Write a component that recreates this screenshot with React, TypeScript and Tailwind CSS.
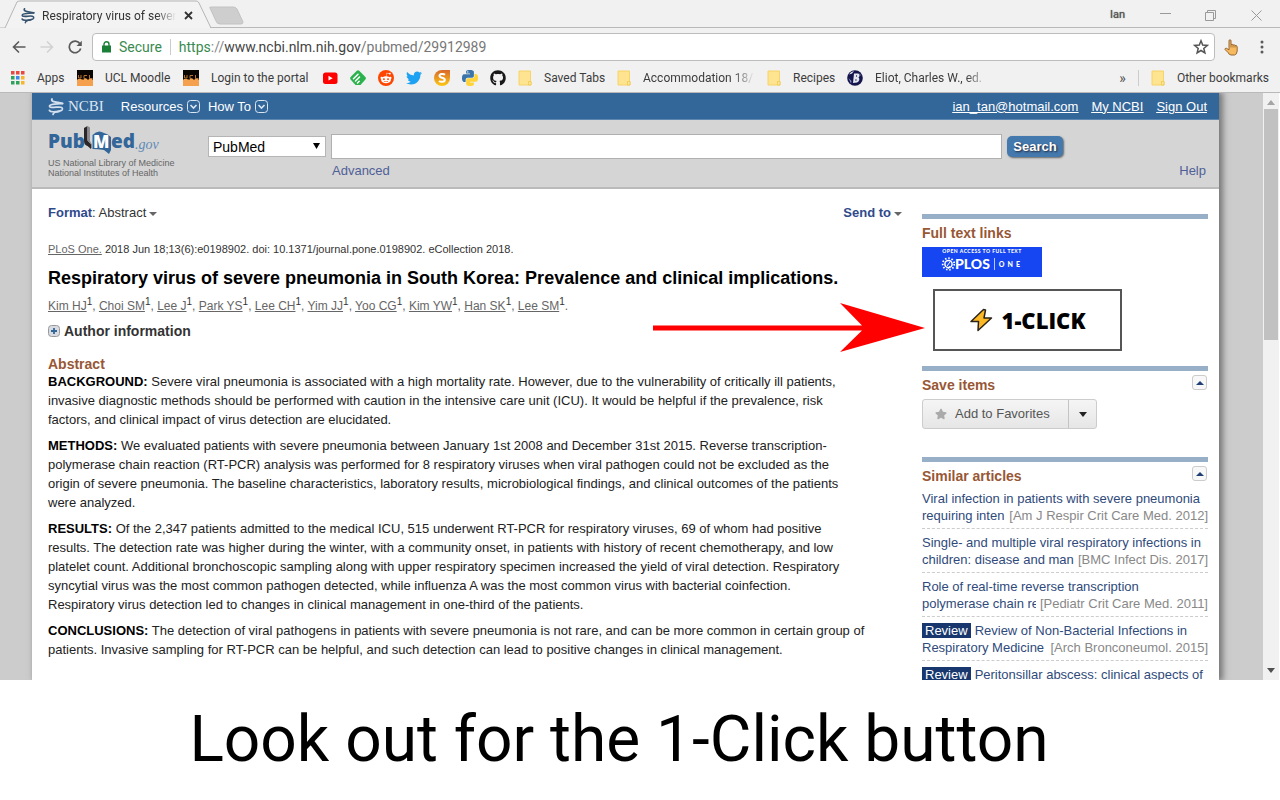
import type { ReactNode } from 'react';
import { FaGithub, FaRedditAlien, FaTwitter, FaStar } from 'react-icons/fa';

const bookLabel = 'overflow-hidden whitespace-nowrap text-[#3c3c3c]';

function HelixIcon({ className, color }: { className: string; color: string }) {
  return (
    <svg viewBox="0 0 16 18" className={className} fill="none" stroke={color} strokeLinecap="round">
      <path d="M14.500 5.500C11 6.500 3 5 1.500 8C1.200 9.800 5 9.500 8 9.200C12 8.800 15 9 14.300 11.500C13.500 14 6 12.500 5 16.500" strokeWidth="1.700" />
      <path d="M4 1C2.500 4.500 9 4 14.500 5.500M1.500 12.500C2 14 8 13.800 11 13.500" strokeWidth="1.900" />
    </svg>
  );
}

function FolderIcon() {
  return (
    <svg viewBox="0 0 14 16" className="h-4 w-[14px] shrink-0">
      <path d="M1 1h11.500v10.500h.5V15H1z" fill="#fee391" stroke="#f6d466" strokeWidth="1" />
      <path d="M10.500 11.500h2.500V15h-2.500z" fill="#fde79f" stroke="#efc84c" strokeWidth=".8" />
    </svg>
  );
}

function UclIcon() {
  return (
    <svg viewBox="0 0 16 16" className="size-4 shrink-0">
      <path d="M0 0h16v16H0z" fill="#f5a04d" />
      <path d="M0 0h16v9.500H15V8.500H12V9.500H10V9H7V9.500H4.500V9H1V9.500H0z" fill="#0b0603" />
      <path d="M1.500 5v3h2.500V5M10 5.500H7v3h2.500M12.500 5v3.500h3" fill="none" stroke="#b5742f" strokeWidth="1" />
    </svg>
  );
}

function YoutubeIcon() {
  return (
    <svg viewBox="0 0 16 16" className="size-4">
      <rect x="1" y="2.500" width="14.500" height="11.500" rx="2.500" fill="#f00" />
      <path d="M6.500 5.800v4.800l4.200-2.400z" fill="#fff" />
    </svg>
  );
}

function FeedlyIcon() {
  return (
    <svg viewBox="0 0 16 16" className="size-4">
      <path d="M6.800.8q1.200-1 2.400 0l6.200 6.200q1 1.200 0 2.400L10.500 15h-5L.6 9.400q-1-1.200 0-2.400z" fill="#2bb24c" />
      <path d="M3.500 8.800L8 4.300M5.500 11L9.500 7M7.500 13l1.700-1.700" stroke="#fff" strokeWidth="1.500" strokeLinecap="round" />
    </svg>
  );
}

function PythonIcon() {
  return (
    <svg viewBox="0 0 24 24" className="size-4">
      <path
        fill="#3b74a8"
        d="M14.25.18l.9.2.73.26.59.3.45.32.34.34.25.34.16.33.1.3.04.26.02.2-.01.13V8.5l-.05.63-.13.55-.21.46-.26.38-.3.31-.33.25-.35.19-.35.14-.33.1-.3.07-.26.04-.21.02H8.77l-.69.05-.59.14-.5.22-.41.27-.33.32-.27.35-.2.36-.15.37-.1.35-.07.32-.04.27-.02.21v3.06H3.17l-.21-.03-.28-.07-.32-.12-.35-.18-.36-.26-.36-.36-.35-.46-.32-.59-.28-.73-.21-.88-.14-1.05-.05-1.23.06-1.22.16-1.04.24-.87.32-.71.36-.57.4-.44.42-.33.42-.24.4-.16.36-.1.32-.05.24-.01h.16l.06.01h8.16v-.83H6.18l-.01-2.75-.02-.37.05-.34.11-.31.17-.28.25-.26.31-.23.38-.2.44-.18.51-.15.58-.12.64-.1.71-.06.77-.04.84-.02 1.27.05zm-6.3 1.98l-.23.33-.08.41.08.41.23.34.33.22.41.09.41-.09.33-.22.23-.34.08-.41-.08-.41-.23-.33-.33-.22-.41-.09-.41.09z"
      />
      <path
        fill="#ffd43b"
        d="M21.1 6.11l.28.06.32.12.35.18.36.27.36.35.35.47.32.59.28.73.21.88.14 1.04.05 1.23-.06 1.23-.16 1.04-.24.86-.32.71-.36.57-.4.45-.42.33-.42.24-.4.16-.36.09-.32.05-.24.02-.16-.01h-8.22v.82h5.84l.01 2.76.02.36-.05.34-.11.31-.17.29-.25.25-.31.24-.38.2-.44.17-.51.15-.58.13-.64.09-.71.07-.77.04-.84.01-1.27-.04-1.07-.14-.9-.2-.73-.25-.59-.3-.45-.33-.34-.34-.25-.34-.16-.33-.1-.3-.04-.25-.02-.2.01-.13v-5.34l.05-.64.13-.54.21-.46.26-.38.3-.32.33-.24.35-.2.35-.14.33-.1.3-.06.26-.04.21-.02.13-.01h5.84l.69-.05.59-.14.5-.21.41-.28.33-.32.27-.35.2-.36.15-.36.1-.35.07-.32.04-.28.02-.21V6.07h2.09l.14.01z"
      />
    </svg>
  );
}

function SearchBadgeIcon() {
  return (
    <svg viewBox="0 0 16 16" className="size-4">
      <defs>
        <linearGradient id="sun" x1="0" y1="0" x2="0" y2="1">
          <stop offset="0" stopColor="#d8692a" />
          <stop offset="1" stopColor="#fcc812" />
        </linearGradient>
      </defs>
      <path d="M8 0h8v8a8 8 0 1 1-8-8z" fill="url(#sun)" />
      <path d="M11 4.800C9.500 3.500 5.500 3.700 5.500 5.800C5.500 8.300 10.800 7.200 10.800 9.900C10.800 12.200 6.800 12.300 5 11" fill="none" stroke="#fff" strokeWidth="2" />
    </svg>
  );
}

function GlobeIcon() {
  return (
    <svg viewBox="0 0 16 16" className="size-4 shrink-0">
      <circle cx="8" cy="8" r="7.800" fill="#15154e" />
      <path d="M2 4.500Q3.500 1.500 7 1L5 3.500zM7 3.500h4c2 0 2 3 .5 4c1.500 1 1 4-1.500 5L6 13z" fill="#e4e6f0" />
      <path d="M1.500 8L4.500 11l-.5 2.500zM12 2.500L14.500 6l-1-.5z" fill="#8d93bd" />
      <path d="M9 5v2l1.300-1zM8.500 9v2l1.500-1z" fill="#15154e" />
    </svg>
  );
}

function Bookmark({ icon, children, width }: { icon: ReactNode; children: string; width: string }) {
  return (
    <a href="#" className="flex shrink-0 items-center gap-3">
      {icon}
      <span className={`${bookLabel} ${width}`}>{children}</span>
    </a>
  );
}

function BrowserChrome() {
  return (
    <header className="border-b border-[#b9b9b9] bg-[#f1f1f1] font-['Roboto',sans-serif] text-xs">
      <div className="relative flex h-7 items-center pt-[3px] pr-4">
        <svg viewBox="0 0 250 28" className="absolute left-0 top-0 h-7 w-[250px]" fill="none">
          <path d="M0 28h5L17 2q1-1 3-1h176q2 0 3 2l12 25h39" fill="#f3f3f3" stroke="#b5b5b5" />
          <path d="M210 8q-1-1 1-1h22q3 0 4 2l6 13q0 2-2 2h-21q-3 0-4-3z" fill="#cecece" stroke="#c2c2c2" />
        </svg>
        <div className="absolute bottom-0 left-[210px] right-0 h-px bg-[#b9b9b9]" />
        <div className="relative flex items-center pl-5">
          <HelixIcon className="h-4 w-4" color="#35536f" />
          <span className="ml-[6px] w-[134px] overflow-hidden whitespace-nowrap text-[#333] [mask-image:linear-gradient(to_right,black_85%,transparent)]">
            Respiratory virus of sever
          </span>
          <button aria-label="Close tab" className="ml-2 text-[#333]">
            <svg viewBox="0 0 9 9" className="size-[9px]" stroke="currentColor" strokeWidth="1.800">
              <path d="M1 1l7 7M8 1L1 8" />
            </svg>
          </button>
        </div>
        <div className="ml-auto flex items-center text-[#999]">
          <button className="mr-[35px] text-[11px] text-[#555] [text-shadow:0_0_1px_#555]">Ian</button>
          <button aria-label="Minimize" className="mr-[34px]">
            <svg viewBox="0 0 11 11" className="size-[11px]" stroke="currentColor"><path d="M0 3.500h11" /></svg>
          </button>
          <button aria-label="Restore" className="mr-[35px]">
            <svg viewBox="0 0 11 11" className="size-[11px]" fill="none" stroke="currentColor">
              <path d="M.5 2.500h8v8h-8zM2.500 2.500v-2h8v8h-2" />
            </svg>
          </button>
          <button aria-label="Close window" className="mr-[2px]">
            <svg viewBox="0 0 11 11" className="size-[11px]" stroke="currentColor"><path d="M.5.5l10 10M10.500.5l-10 10" /></svg>
          </button>
        </div>
      </div>

      <div className="flex h-[38px] items-center pl-3 pr-4">
        <button aria-label="Back" className="mr-[14px]">
          <svg viewBox="0 0 14 14" className="size-[14px]" fill="none" stroke="#5a5a5a" strokeWidth="1.600"><path d="M13.500 7H1.500M7 1.500L1.500 7L7 12.500" /></svg>
        </button>
        <button aria-label="Forward" className="mr-[14px]">
          <svg viewBox="0 0 14 14" className="size-[14px]" fill="none" stroke="#d2d2d2" strokeWidth="1.600"><path d="M.5 7h12M7 1.500L12.500 7L7 12.500" /></svg>
        </button>
        <button aria-label="Reload" className="mr-[10px]">
          <svg viewBox="0 0 14 14" className="size-[14px]">
            <path d="M12 3.800A5.800 5.800 0 1 0 12.700 8.500" fill="none" stroke="#5a5a5a" strokeWidth="1.700" />
            <path d="M13.800.8v5.200H8.500z" fill="#5a5a5a" />
          </svg>
        </button>
        <div className="flex h-7 flex-1 items-center rounded-sm border border-[#bdbdbd] bg-white px-[9px] text-sm">
          <svg viewBox="0 0 9 12" className="mr-2 h-3 w-[9px]">
            <path d="M2 5V3.300a2.500 2.500 0 0 1 5 0V5" fill="none" stroke="#1a7f37" strokeWidth="1.400" />
            <path d="M0 4.500h9V11.500H0z" fill="#1a7f37" />
          </svg>
          <span className="text-[#3a8a50]">Secure</span>
          <span className="mx-2 h-4 w-px bg-[#ccc]" />
          <span className="flex-1 text-[#444]">
            <span className="text-[#3a8a50]">https</span>
            <span className="text-[#888]">://</span>www.ncbi.nlm.nih.gov
            <span className="text-[#777]">/pubmed/29912989</span>
          </span>
          <button aria-label="Bookmark this page" className="-mr-1">
            <svg viewBox="0 0 16 16" className="size-4" fill="none" stroke="#555" strokeWidth="1.500">
              <path d="M8 1.800l1.700 4.300 4.600.3-3.500 3 1.100 4.500L8 11.500l-3.900 2.400 1.100-4.500-3.500-3 4.600-.3z" />
            </svg>
          </button>
        </div>
        <button aria-label="1-Click extension" className="ml-[9px]">
          <svg viewBox="0 0 16 17" className="h-[17px] w-4">
            <path
              d="M5 8.500V1.800Q5 .8 6 .8T7 1.800V5.500Q8.500 4.800 9 6Q10.500 5.300 11 6.500Q13 6 13.200 8V12Q13 15.500 10.500 16H7Q5 15.800 4 13.500L1 10.500Q.8 9 2.500 9.300L5 10.800z"
              fill="#f7b95e"
              stroke="#8b5a2c"
              strokeWidth=".9"
            />
            <path d="M7 5.500v3M9 6v2.500M11 6.500v2" stroke="#9a652f" strokeWidth=".8" />
          </svg>
        </button>
        <button aria-label="Menu" className="ml-5">
          <svg viewBox="0 0 4 14" className="h-[14px] w-1" fill="#5a5a5a">
            <circle cx="2" cy="2" r="1.500" /><circle cx="2" cy="7" r="1.500" /><circle cx="2" cy="12" r="1.500" />
          </svg>
        </button>
      </div>

      <nav className="flex h-[26px] items-center gap-3 pb-1 pl-[11px] pr-[11px] pt-[2px]">
        <Bookmark
          width="w-[28px]"
          icon={
            <svg viewBox="0 0 14 14" className="size-[14px] shrink-0">
              <path d="M0 0h3.500v3.500H0zM5 0h3.500v3.500H5zM10 0h3.500v3.500H10z" fill="#e8483f" />
              <path d="M0 5h3.500v3.500H0zM0 10h3.500v3.500H0zM5 10h3.500v3.500H5z" fill="#2fa25a" />
              <path d="M5 5h3.500v3.500H5z" fill="#3f86ee" />
              <path d="M10 5h3.500v3.500H10zM10 10h3.500v3.500H10z" fill="#f7b52b" />
            </svg>
          }
        >
          Apps
        </Bookmark>
        <Bookmark icon={<UclIcon />} width="w-[66px]">UCL Moodle</Bookmark>
        <Bookmark icon={<UclIcon />} width="w-[99px]">Login to the portal</Bookmark>
        <a href="#" aria-label="YouTube"><YoutubeIcon /></a>
        <a href="#" aria-label="Feedly"><FeedlyIcon /></a>
        <a href="#" aria-label="Reddit" className="flex size-4 items-center justify-center rounded-full bg-[#ff4500] text-white">
          <FaRedditAlien className="size-3" />
        </a>
        <a href="#" aria-label="Twitter" className="text-[#1da1f2]"><FaTwitter className="size-4" /></a>
        <a href="#" aria-label="Scholar"><SearchBadgeIcon /></a>
        <a href="#" aria-label="Python"><PythonIcon /></a>
        <a href="#" aria-label="GitHub" className="text-[#191717]"><FaGithub className="size-4" /></a>
        <Bookmark icon={<FolderIcon />} width="w-[61px]">Saved Tabs</Bookmark>
        <Bookmark icon={<FolderIcon />} width="w-[112px] [mask-image:linear-gradient(to_right,black_80%,transparent)]">
          Accommodation 18/
        </Bookmark>
        <Bookmark icon={<FolderIcon />} width="w-[42px]">Recipes</Bookmark>
        <Bookmark icon={<GlobeIcon />} width="w-[114px] [mask-image:linear-gradient(to_right,black_80%,transparent)]">
          Eliot, Charles W., ed.
        </Bookmark>
        <button aria-label="More bookmarks" className="ml-auto text-sm text-[#555]">»</button>
        <span className="h-4 w-px shrink-0 bg-[#ccc]" />
        <Bookmark icon={<FolderIcon />} width="">Other bookmarks</Bookmark>
      </nav>
    </header>
  );
}

function MenuChevron() {
  return (
    <svg viewBox="0 0 13 13" className="size-[13px]" fill="none" stroke="#dbe6f2">
      <rect x=".5" y=".5" width="12" height="12" rx="3" />
      <path d="M3.500 5l3 3 3-3" strokeWidth="1.600" />
    </svg>
  );
}

function NcbiBar() {
  return (
    <div className="flex h-[27px] items-center border-b border-[#5d86b0] bg-[#336699] pl-4 pr-3 pt-px text-[13px] text-white">
      <a href="#" className="mr-[17px] flex items-center gap-1">
        <HelixIcon className="h-[18px] w-4" color="#d3e0ee" />
        <span className="font-['Liberation_Serif',serif] text-[15px] text-[#dce7f2]">NCBI</span>
      </a>
      <button className="mr-2 flex items-center gap-1">Resources <MenuChevron /></button>
      <button className="flex items-center gap-1">How To <MenuChevron /></button>
      <nav className="ml-auto flex gap-[13px] underline">
        <a href="#">ian_tan@hotmail.com</a>
        <a href="#">My NCBI</a>
        <a href="#">Sign Out</a>
      </nav>
    </div>
  );
}

function PubMedLogo() {
  return (
    <svg viewBox="0 0 114 30" className="h-[30px] w-[114px]" aria-label="PubMed.gov">
      <path d="M36 3l3.500-2v14.500l3.500 3.500v5l-3.500-3q-3.500-1-3.500-5z" fill="#2d2628" />
      <path d="M39.500 1l2.500 1.500v13.500l2 3.500v4l-1-.5v-3.500l-3.500-4z" fill="#8c8c90" />
      <path d="M44.500 10Q50 4 56 8Q60 9 63 12V25L61 29L56 25Q50 24 44.500 24z" fill="#336699" />
      <g fontFamily="'Open Sans', sans-serif" fontWeight="800" fontSize="19" fill="#336699">
        <text x="0" y="23">Pub</text>
        <text x="45" y="23" fill="#fff" fontSize="17">M</text>
        <text x="63" y="23">ed</text>
      </g>
      <text x="87" y="24" fontFamily="'Liberation Serif', serif" fontStyle="italic" fontSize="14" fill="#5f8bb5">.gov</text>
    </svg>
  );
}

function SearchHeader() {
  return (
    <div className="flex h-[69px] border-b-2 border-[#bababa] bg-[#d5d5d5] pl-4">
      <div className="w-40 shrink-0 pt-[5px] text-[9px] leading-[10px] text-[#666]">
        <PubMedLogo />
        <p className="mt-[3px]">US National Library of Medicine</p>
        <p>National Institutes of Health</p>
      </div>
      <div className="flex-1 pt-[14px]">
        <form className="flex items-center gap-[5px] pr-[156px]">
          <span className="relative">
            <select aria-label="Database" className="block h-[21px] w-[118px] appearance-none border border-[#b5b5b5] bg-white pl-1 text-sm leading-none text-black">
              <option>PubMed</option>
            </select>
            <svg viewBox="0 0 7 6" className="pointer-events-none absolute right-[6px] top-[7px] h-[6px] w-[7px]"><path d="M0 0h7L3.500 6z" /></svg>
          </span>
          <input type="text" aria-label="Search term" className="h-[25px] min-w-0 flex-1 border border-[#b0b0b0] bg-white px-1" />
          <button type="button" className="h-[21px] w-14 rounded-[5px] bg-[#4479ae] text-[13px] leading-none font-bold text-white shadow-[1px_1px_2px_#666] [text-shadow:1px_1px_2px_#223]">
            Search
          </button>
        </form>
        <div className="flex justify-between pl-[124px] pr-[13px] pt-1 text-[13px] leading-4 text-[#4f5f98]">
          <a href="#">Advanced</a>
          <a href="#">Help</a>
        </div>
      </div>
    </div>
  );
}

const authors = ['Kim HJ', 'Choi SM', 'Lee J', 'Park YS', 'Lee CH', 'Yim JJ', 'Yoo CG', 'Kim YW', 'Han SK', 'Lee SM'];

const abstract = [
  {
    label: 'BACKGROUND:',
    text: `Severe viral pneumonia is associated with a high mortality rate. However, due to the vulnerability of critically ill patients,
invasive diagnostic methods should be performed with caution in the intensive care unit (ICU). It would be helpful if the prevalence, risk
factors, and clinical impact of virus detection are elucidated.`,
  },
  {
    label: 'METHODS:',
    text: `We evaluated patients with severe pneumonia between January 1st 2008 and December 31st 2015. Reverse transcription-
polymerase chain reaction (RT-PCR) analysis was performed for 8 respiratory viruses when viral pathogen could not be excluded as the
origin of severe pneumonia. The baseline characteristics, laboratory results, microbiological findings, and clinical outcomes of the patients
were analyzed.`,
  },
  {
    label: 'RESULTS:',
    text: `Of the 2,347 patients admitted to the medical ICU, 515 underwent RT-PCR for respiratory viruses, 69 of whom had positive
results. The detection rate was higher during the winter, with a community onset, in patients with history of recent chemotherapy, and low
platelet count. Additional bronchoscopic sampling along with upper respiratory specimen increased the yield of viral detection. Respiratory
syncytial virus was the most common pathogen detected, while influenza A was the most common virus with bacterial coinfection.
Respiratory virus detection led to changes in clinical management in one-third of the patients.`,
  },
  {
    label: 'CONCLUSIONS:',
    text: `The detection of viral pathogens in patients with severe pneumonia is not rare, and can be more common in certain group of
patients. Invasive sampling for RT-PCR can be helpful, and such detection can lead to positive changes in clinical management.`,
  },
];

function Caret() {
  return <svg viewBox="0 0 8 4" className="ml-[3px] inline-block h-1 w-2" fill="#666"><path d="M0 0h8L4 4z" /></svg>;
}

function Article() {
  return (
    <article className="min-w-0 flex-1 pt-[15px] text-[#333]">
      <div className="flex justify-between pr-5 text-[13px] leading-[18px]">
        <button><b className="text-[#2f4a8b]">Format</b>: Abstract<Caret /></button>
        <button className="font-bold text-[#2f4a8b]">Send to<Caret /></button>
      </div>
      <p className="mt-[19px] text-[11px] leading-4">
        <a href="#" className="text-[#666] underline">PLoS One.</a> 2018 Jun 18;13(6):e0198902. doi: 10.1371/journal.pone.0198902. eCollection 2018.
      </p>
      <h1 className="mt-[9px] text-lg leading-6 font-bold text-black">
        Respiratory virus of severe pneumonia in South Korea: Prevalence and clinical implications.
      </h1>
      <p className="mt-[6px] text-xs leading-5 text-[#666]">
        {authors.map((name, i) => (
          <span key={name}>
            <a href="#" className="underline">{name}</a>
            <sup className="text-[10px] text-[#333]">1</sup>
            {i < authors.length - 1 ? ', ' : '.'}
          </span>
        ))}
      </p>
      <button className="mt-[6px] flex items-center gap-1 text-sm leading-[18px] font-bold">
        <svg viewBox="0 0 12 12" className="size-3">
          <rect x=".5" y=".5" width="11" height="11" rx="3" fill="#d8dce2" stroke="#999" />
          <path d="M6 3v6M3 6h6" stroke="#336699" strokeWidth="1.800" />
        </svg>
        Author information
      </button>
      <h2 className="mt-4 text-sm leading-4 font-bold text-[#985735]">Abstract</h2>
      <div className="text-[13px] leading-[19px] whitespace-pre-line text-[#222]">
        {abstract.map((part) => (
          <p key={part.label} className="mb-[7px]">
            <b className="text-black">{part.label}</b> {part.text}
          </p>
        ))}
      </div>
    </article>
  );
}

const similar = [
  { title: ['Viral infection in patients with severe pneumonia', 'requiring inten'], source: '[Am J Respir Crit Care Med. 2012]' },
  { title: ['Single- and multiple viral respiratory infections in', 'children: disease and man'], source: '[BMC Infect Dis. 2017]' },
  { title: ['Role of real-time reverse transcription', 'polymerase chain re'], source: '[Pediatr Crit Care Med. 2011]' },
  { title: ['Review of Non-Bacterial Infections in', 'Respiratory Medicine'], source: '[Arch Bronconeumol. 2015]', review: true },
  { title: ['Peritonsillar abscess: clinical aspects of', ''], source: '', review: true },
];

function CollapseButton() {
  return (
    <button aria-label="Collapse" className="flex size-[15px] items-center justify-center rounded-[3px] border border-[#ccc] bg-[#f8f8f8]">
      <svg viewBox="0 0 8 4" className="h-1 w-2" fill="#1f3f77"><path d="M0 4h8L4 0z" /></svg>
    </button>
  );
}

function Portlet({ title, collapsible, className, children }: { title: string; collapsible?: boolean; className: string; children: ReactNode }) {
  return (
    <section className={`border-t-[5px] border-[#97b0c8] ${className}`}>
      <div className="flex justify-between pr-px pt-1">
        <h2 className="pt-[2px] text-sm leading-4 font-bold text-[#985735]">{title}</h2>
        {collapsible && <CollapseButton />}
      </div>
      {children}
    </section>
  );
}

function Sidebar() {
  return (
    <aside className="w-[286px] shrink-0 pt-[25px]">
      <Portlet title="Full text links" className="h-[152px]">
        <a href="#" className="mt-[6px] flex h-[30px] w-[120px] flex-col items-center bg-[#1546f2] font-['Lato',sans-serif] text-white">
          <span className="pt-px text-[5px] leading-[7px] font-black tracking-widest whitespace-nowrap">OPEN ACCESS TO FULL TEXT</span>
          <span className="flex items-center text-sm leading-[18px] font-black">
            <svg viewBox="0 0 14 14" className="size-[14px]" fill="none" stroke="#fff">
              <circle cx="7.500" cy="7" r="3.600" strokeWidth="1.500" />
              <circle cx="7.500" cy="7" r="5.800" strokeWidth="1.800" strokeDasharray="1.500 1.800" />
              <path d="M6 9l3-4M7 12l2-3" />
            </svg>
            PLOS
            <span className="mx-1 h-3 w-px bg-white/70" />
            <span className="text-[7px] tracking-[3px]">ONE</span>
          </span>
        </a>
        <div className="relative ml-[11px] mt-3 w-[189px]">
          <button className="flex h-[62px] w-full items-center justify-center gap-2 border-2 border-[#555] bg-white font-['Open_Sans',sans-serif] text-[22px] font-extrabold text-black">
            <svg viewBox="0 0 24 24" className="size-6" fill="#fdb924" stroke="#2b2419" strokeWidth="1.500" strokeLinejoin="round">
              <path d="M14.500 1.500L2 13.500h7.500L9 22.500L22.500 10H15L16.500 2z" />
            </svg>
            1-CLICK
          </button>
          <svg viewBox="0 0 272 50" className="absolute right-full top-[14px] mr-2 h-[50px] w-[272px]" fill="#f00">
            <path d="M0 22.500h209L187 0L272 25L187 49L209 27.500H0z" />
          </svg>
        </div>
      </Portlet>

      <Portlet title="Save items" collapsible className="h-[91px]">
        <div className="mt-[6px] flex h-[30px] w-[175px] rounded-[3px] border border-[#ccc] bg-linear-to-b from-[#f5f5f5] to-[#e6e6e6] text-[13px] text-[#555]">
          <button className="flex flex-1 items-center gap-2 pl-3"><FaStar className="size-3 text-[#aaa]" />Add to Favorites</button>
          <button aria-label="More save options" className="flex w-7 items-center justify-center border-l border-[#c4c4c4]">
            <svg viewBox="0 0 8 5" className="h-[5px] w-2" fill="#222"><path d="M0 0h8L4 5z" /></svg>
          </button>
        </div>
      </Portlet>

      <Portlet title="Similar articles" collapsible className="">
        <ul className="pt-px text-[13px] leading-[17px]">
          {similar.map((item) => (
            <li key={item.title[0]} className="relative border-b border-dashed border-[#ccc] pb-1 pt-[5px]">
              <a href="#" className="block whitespace-nowrap text-[#2f4a7b]">
                {item.review && <span className="mr-1 bg-[#17376e] px-[3px] text-white">Review</span>}
                {item.title[0]}
                <br />
                {item.title[1]}
              </a>
              <span className="absolute bottom-1 right-0 bg-white pl-1 text-[#888]">{item.source}</span>
            </li>
          ))}
        </ul>
      </Portlet>
    </aside>
  );
}

function Scrollbar() {
  return (
    <div className="flex w-[17px] shrink-0 flex-col items-center border-r border-white bg-[#f1f1f1] py-[7px]">
      <svg viewBox="0 0 8 5" className="h-[5px] w-2 shrink-0" fill="#a5a5a5"><path d="M0 5h8L4 0z" /></svg>
      <div className="mt-1 h-[231px] w-[14px] shrink-0 bg-[#c1c1c1]" />
      <svg viewBox="0 0 8 5" className="mt-auto h-[5px] w-2 shrink-0" fill="#505050"><path d="M0 0h8L4 5z" /></svg>
    </div>
  );
}

export default function App() {
  return (
    <div className="flex h-screen flex-col overflow-hidden bg-white font-['Liberation_Sans',Arial,sans-serif]">
      <BrowserChrome />
      <div className="flex min-h-0 flex-1 overflow-hidden bg-[#ccc]">
        <main className="ml-8 mr-11 min-w-0 flex-1 bg-white shadow-[3px_0_6px_1px_#777]">
          <NcbiBar />
          <SearchHeader />
          <div className="flex pl-4 pr-[11px]">
            <Article />
            <Sidebar />
          </div>
        </main>
        <Scrollbar />
      </div>
      <footer className="h-[120px] shrink-0 pr-[42px] text-center font-['Roboto',sans-serif] text-[64px] leading-[120px] text-black">
        Look out for the 1-Click button
      </footer>
    </div>
  );
}
